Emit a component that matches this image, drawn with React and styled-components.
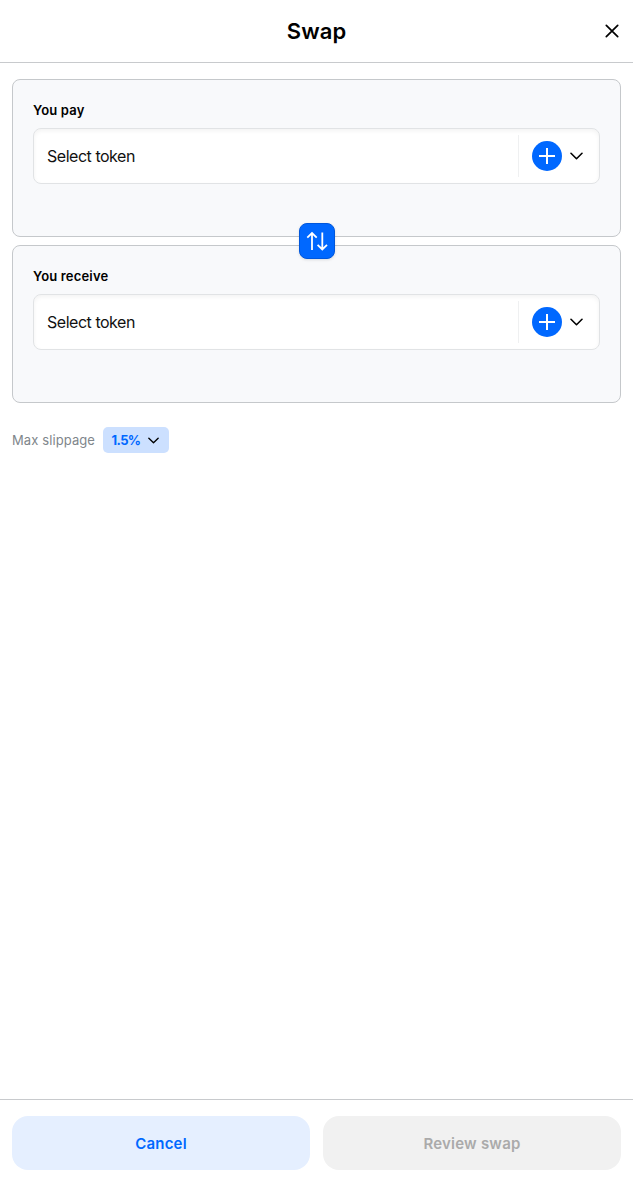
import React from 'react';
import styled, { createGlobalStyle } from 'styled-components';

const GlobalStyle = createGlobalStyle`
  * { box-sizing: border-box; }
  body { margin: 0; background: #fff; }
  button { font: inherit; border: 0; padding: 0; cursor: pointer; }
`;

const Page = styled.div`
  min-height: 100vh;
  display: flex;
  flex-direction: column;
  font-family: Inter, "Liberation Sans", sans-serif;
  color: #000;
`;

const Header = styled.header`
  height: 63px;
  display: grid;
  grid-template-columns: 42px 1fr 42px;
  align-items: center;
  border-bottom: 1px solid #c8cacd;
`;

const Title = styled.h1`
  grid-column: 2;
  margin: 0;
  text-align: center;
  font-size: 22px;
  line-height: 28px;
  font-weight: 600;
  letter-spacing: 0.1px;
`;

const CloseButton = styled.button`
  height: 42px;
  display: grid;
  place-items: center;
  background: none;
`;

const Content = styled.main`
  flex: 1;
  padding: 16px 12px;
`;

const Panels = styled.div`
  position: relative;
  display: flex;
  flex-direction: column;
  gap: 8px;
`;

const Panel = styled.section`
  height: 158px;
  padding: 20px;
  border: 1px solid #c5c8cb;
  border-radius: 8px;
  background: #f8f9fb;
`;

const PanelLabel = styled.div`
  height: 28px;
  line-height: 21px;
  font-size: 13px;
  font-weight: 600;
  letter-spacing: 0.17px;
`;

const TokenField = styled.div`
  height: 56px;
  display: flex;
  align-items: center;
  padding: 0 16px 0 13px;
  border: 1px solid #e1e3e5;
  border-radius: 8px;
  background: #fff;
  box-shadow: inset 0 2px 4px rgba(0, 0, 0, 0.05);
`;

const Placeholder = styled.span`
  flex: 1;
  font-size: 16px;
  line-height: 24px;
  letter-spacing: -0.47px;
  color: #111;
`;

const TokenPicker = styled.button`
  height: 42px;
  display: flex;
  align-items: center;
  gap: 8px;
  padding-left: 13px;
  border-left: 1px solid #eff0f1;
  background: none;
`;

const TokenBadge = styled.span`
  width: 30px;
  height: 30px;
  display: grid;
  place-items: center;
  border-radius: 50%;
  background: #0068ff;
`;

const FlipButton = styled.button`
  position: absolute;
  top: 50%;
  left: 50%;
  width: 36px;
  height: 36px;
  transform: translate(-50%, -50%);
  display: grid;
  place-items: center;
  border: 1px solid #0057dc;
  border-radius: 8px;
  background: #0068ff;
  box-shadow: 0 1px 3px rgba(0, 0, 0, 0.12);
`;

const Slippage = styled.div`
  margin-top: 24px;
  display: flex;
  align-items: center;
  gap: 8px;
  font-size: 13px;
  line-height: 20px;
  color: #80868b;
`;

const SlippageLabel = styled.span`
  width: 83px;
  white-space: nowrap;
  letter-spacing: 0.1px;
`;

const SlippageSelect = styled.button`
  width: 66px;
  height: 26px;
  display: flex;
  align-items: center;
  justify-content: space-between;
  padding: 0 10px 0 8.5px;
  border-radius: 5px;
  background: #cce0ff;
  color: #0068ff;
  font-weight: 700;
  letter-spacing: -0.6px;
`;

const Footer = styled.footer`
  height: 95px;
  padding: 16px 12px 24px;
  display: grid;
  grid-template-columns: 1fr 1fr;
  gap: 13px;
  border-top: 1px solid #c8cacd;
`;

const ActionButton = styled.button`
  height: 54px;
  border-radius: 16px;
  background: ${(p) => (p.disabled ? '#f1f1f1' : '#e5efff')};
  color: ${(p) => (p.disabled ? '#aaa' : '#0068ff')};
  font-size: 15px;
  font-weight: 600;
  letter-spacing: 0.22px;
  cursor: ${(p) => (p.disabled ? 'default' : 'pointer')};
`;

function Chevron({ width = 13, height = 8 }) {
  return (
    <svg width={width} height={height} viewBox="0 0 13 8" fill="none" stroke="#000" strokeWidth="1.6" strokeLinecap="round" strokeLinejoin="round">
      <path d="M1 1.3L6.5 6.7L12 1.3" />
    </svg>
  );
}

function TokenPanel({ label }) {
  return (
    <Panel>
      <PanelLabel>{label}</PanelLabel>
      <TokenField>
        <Placeholder>Select token</Placeholder>
        <TokenPicker aria-label="Choose token">
          <TokenBadge>
            <svg width="16" height="16" viewBox="0 0 16 16" stroke="#fff" strokeWidth="2">
              <path d="M8 0V16M0 8H16" />
            </svg>
          </TokenBadge>
          <Chevron />
        </TokenPicker>
      </TokenField>
    </Panel>
  );
}

export default function App() {
  return (
    <Page>
      <GlobalStyle />
      <Header>
        <Title>Swap</Title>
        <CloseButton aria-label="Close">
          <svg width="14" height="14" viewBox="0 0 14 14" stroke="#000" strokeWidth="1.7" strokeLinecap="round">
            <path d="M1.3 1.3L12.7 12.7M12.7 1.3L1.3 12.7" />
          </svg>
        </CloseButton>
      </Header>
      <Content>
        <Panels>
          <TokenPanel label="You pay" />
          <TokenPanel label="You receive" />
          <FlipButton aria-label="Switch tokens">
            <svg width="22" height="20" viewBox="0 0 22 20" fill="none" stroke="#fff" strokeWidth="1.8">
              <path d="M6 19V2M1.3 6.6L6 2L10.7 6.6" />
              <path d="M16.3 1.5V18.5M11.6 13.9L16.3 18.5L21 13.9" />
            </svg>
          </FlipButton>
        </Panels>
        <Slippage>
          <SlippageLabel>Max slippage</SlippageLabel>
          <SlippageSelect>
            1.5%
            <Chevron width={11} height={7} />
          </SlippageSelect>
        </Slippage>
      </Content>
      <Footer>
        <ActionButton>Cancel</ActionButton>
        <ActionButton disabled>Review swap</ActionButton>
      </Footer>
    </Page>
  );
}
